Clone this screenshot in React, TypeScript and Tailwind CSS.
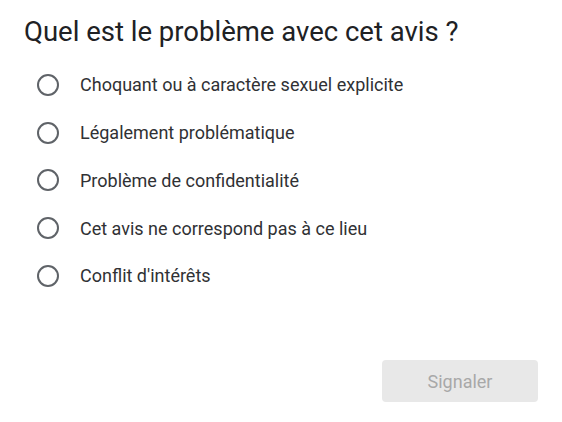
import React, { useState } from "react";

const options = [
  "Choquant ou à caractère sexuel explicite",
  "Légalement problématique",
  "Problème de confidentialité",
  "Cet avis ne correspond pas à ce lieu",
  "Conflit d'intérêts",
];

export default function App() {
  const [selected, setSelected] = useState<number | null>(null);

  return (
    <div className="w-[562px] h-[422px] bg-white flex flex-col font-['Roboto',sans-serif]">
      {/* Title */}
      <h1 className="pl-6 pt-[16px] text-[27.5px] leading-[32px] text-[#202124]">Quel est le problème avec cet avis ?</h1>

      {/* Options */}
      <div className="mt-[13px] flex flex-col">
        {options.map((label, i) => (
          <button
            key={label}
            onClick={() => setSelected(i)}
            className="flex items-center h-[47.75px] pl-[37px] text-left cursor-pointer"
          >
            <span className="w-[22px] h-[22px] rounded-full border-2 border-[#5f6368] flex items-center justify-center flex-shrink-0">
              {selected === i && <span className="w-[10px] h-[10px] rounded-full bg-[#1a73e8]" />}
            </span>
            <span className="ml-[21px] text-[18px] text-[#303134]">{label}</span>
          </button>
        ))}
      </div>

      {/* Footer */}
      <div className="flex-1" />
      <div className="flex justify-end pr-6 pb-5">
        <button
          disabled={selected === null}
          className="w-[156px] h-[42px] rounded bg-[#e8e8e8] text-[18px] text-[#a8a8a8] disabled:cursor-default"
        >
          Signaler
        </button>
      </div>
    </div>
  );
}
